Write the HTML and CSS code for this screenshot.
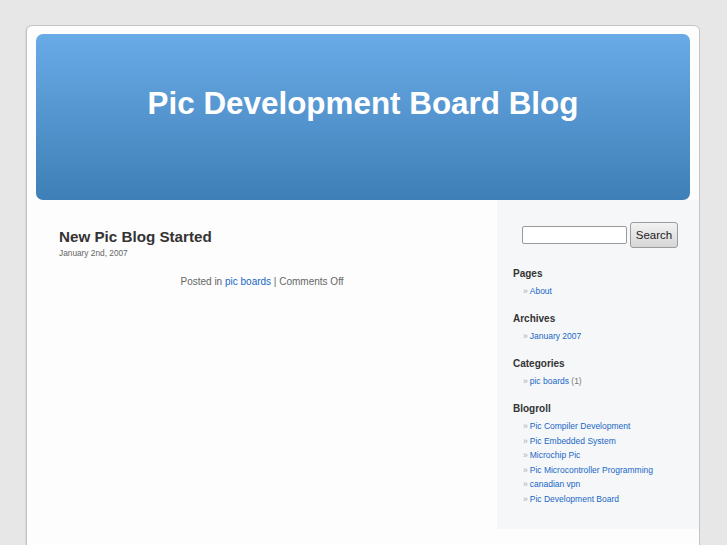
FILE: index.html
```html
<!DOCTYPE html>
<html>
<head>
    <meta charset="utf-8">
    <title>Pic Development Board Blog</title>
    <link rel="stylesheet" href="styles.css">
</head>
<body>
    <div class="page">
        <div class="header">
            <h1 class="blog-title">Pic Development Board Blog</h1>
        </div>
        <div class="columns">
            <div class="content">
                <div class="post">
                    <h2 class="post-title">New Pic Blog Started</h2>
                    <div class="post-date">January 2nd, 2007</div>
                    <div class="post-meta">Posted in <a href="#">pic boards</a> | Comments Off</div>
                </div>
            </div>
            <div class="sidebar">
                <form class="search">
                    <input type="text" class="search-input">
                    <button type="button" class="search-button">Search</button>
                </form>
                <h3 class="widget-title">Pages</h3>
                <ul class="widget-list">
                    <li><a href="#">About</a></li>
                </ul>
                <h3 class="widget-title">Archives</h3>
                <ul class="widget-list">
                    <li><a href="#">January 2007</a></li>
                </ul>
                <h3 class="widget-title">Categories</h3>
                <ul class="widget-list">
                    <li><a href="#">pic boards</a> (1)</li>
                </ul>
                <h3 class="widget-title">Blogroll</h3>
                <ul class="widget-list">
                    <li><a href="#">Pic Compiler Development</a></li>
                    <li><a href="#">Pic Embedded System</a></li>
                    <li><a href="#">Microchip Pic</a></li>
                    <li><a href="#">Pic Microcontroller Programming</a></li>
                    <li><a href="#">canadian vpn</a></li>
                    <li><a href="#">Pic Development Board</a></li>
                </ul>
            </div>
        </div>
        <div class="footer"></div>
    </div>
</body>
</html>
```

FILE: styles.css
```css
body {
    margin: 0;
    background: #e7e7e7;
    font-family: "Liberation Sans", Arial, sans-serif;
    color: #333;
}
a {
    color: #1767c6;
    text-decoration: none;
}
.page {
    margin: 25px 0 0 26px;
    width: 672px;
    background: #fdfdfd;
    border: 1px solid #c4c4c4;
    border-radius: 6px;
    box-shadow: -1px 0 0 #d8d8d8;
}
.header {
    margin: 8px 9px 0 9px;
    height: 166px;
    border-radius: 7px;
    background: linear-gradient(#69abe7, #3f7fb7);
    display: flex;
    justify-content: center;
}
.blog-title {
    margin: 52px 0 0 0;
    color: #fff;
    font-size: 31.4px;
    line-height: 36px;
    font-weight: bold;
}
.columns {
    display: flex;
}
.content {
    flex: 1;
    padding: 28px 32px 0 32px;
}
.post-title {
    margin: 0;
    font-size: 15.2px;
    line-height: 18px;
    color: #333;
}
.post-date {
    margin-top: 2px;
    font-size: 8.3px;
    line-height: 10px;
    color: #666;
}
.post-meta {
    margin-top: 17px;
    text-align: center;
    font-size: 10px;
    line-height: 14px;
    color: #666;
}
.sidebar {
    width: 186px;
    padding: 22px 0 23px 16px;
    background: #f6f7f9;
}
.search {
    display: flex;
    align-items: center;
    margin: 0 0 0 9px;
}
.search-input {
    width: 101px;
    height: 14px;
    margin: 0 3px 0 0;
    padding: 1px;
    border: 1px solid #9a9a9a;
    border-radius: 2px;
    background: #fff;
}
.search-button {
    width: 48px;
    height: 26px;
    padding: 0;
    border: 1px solid #9c9c9c;
    border-radius: 3px;
    background: linear-gradient(#f2f2f2, #d6d6d6);
    font-family: "Liberation Sans", Arial, sans-serif;
    font-size: 11.5px;
    color: #222;
}
.widget-title {
    margin: 19px 0 3px 0;
    font-size: 10px;
    line-height: 14px;
    color: #333;
}
.widget-list + .widget-title {
    margin-top: 13.5px;
}
.widget-list {
    list-style: none;
    margin: 0;
    padding: 0 0 0 10px;
    font-size: 8.5px;
    line-height: 14.5px;
    color: #777;
}
.widget-list li:before {
    content: "\00BB";
    color: #aaa;
    margin-right: 2px;
}
.footer {
    height: 40px;
}
```
